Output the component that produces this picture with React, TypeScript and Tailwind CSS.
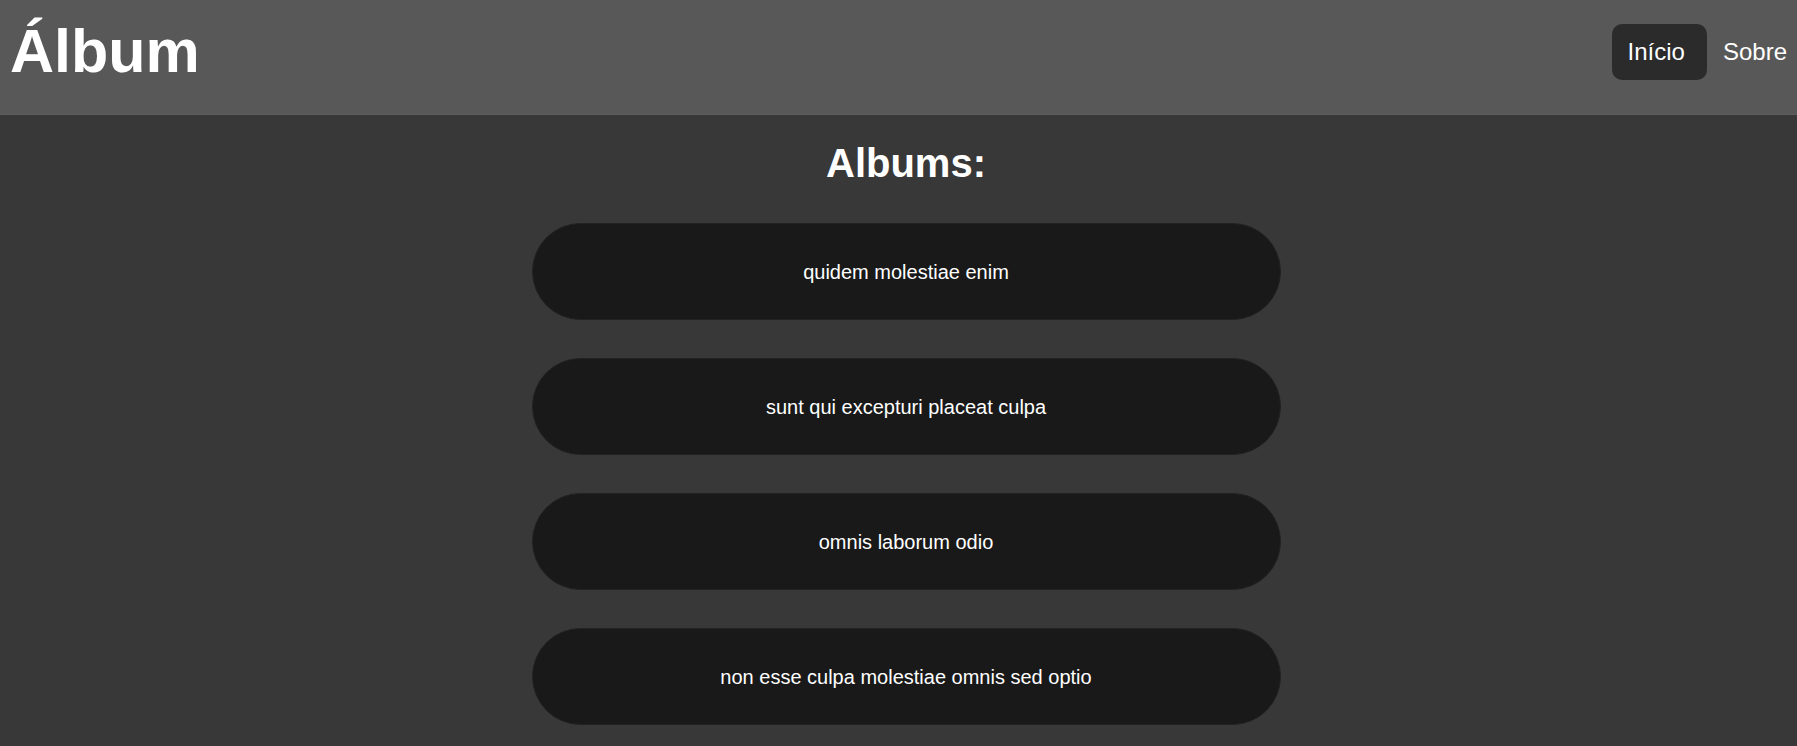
import React from "react";

const albums = [
  "quidem molestiae enim",
  "sunt qui excepturi placeat culpa",
  "omnis laborum odio",
  "non esse culpa molestiae omnis sed optio",
];

export default function App() {
  return (
    <div
      className="min-h-screen w-full overflow-hidden bg-[#383838] text-white"
      style={{ fontFamily: '"Liberation Sans", Arial, sans-serif' }}
    >
      <header className="flex h-[115px] items-center justify-between border-b border-[#5e5e5e] bg-[#585858] pb-[11px] pl-[10px] pr-[10px]">
        <h1 className="text-[61px] font-bold leading-none">Álbum</h1>
        <nav className="flex items-center gap-[16px] text-[24px]">
          <a className="flex h-[56px] items-center rounded-[10px] bg-[#2b2b2b] pl-[16px] pr-[22px]">Início</a>
          <a className="flex h-[56px] items-center">Sobre</a>
        </nav>
      </header>
      <main className="flex flex-col items-center pl-[15px]">
        <h2 className="mt-[24px] text-[40px] font-bold leading-[48px]">Albums:</h2>
        <div className="mt-[36px] flex flex-col gap-[38px]">
          {albums.map((a) => (
            <div
              key={a}
              className="flex h-[97px] w-[749px] items-center justify-center rounded-full border border-[#222] bg-[#191919] text-[20px]"
            >
              {a}
            </div>
          ))}
        </div>
      </main>
    </div>
  );
}
